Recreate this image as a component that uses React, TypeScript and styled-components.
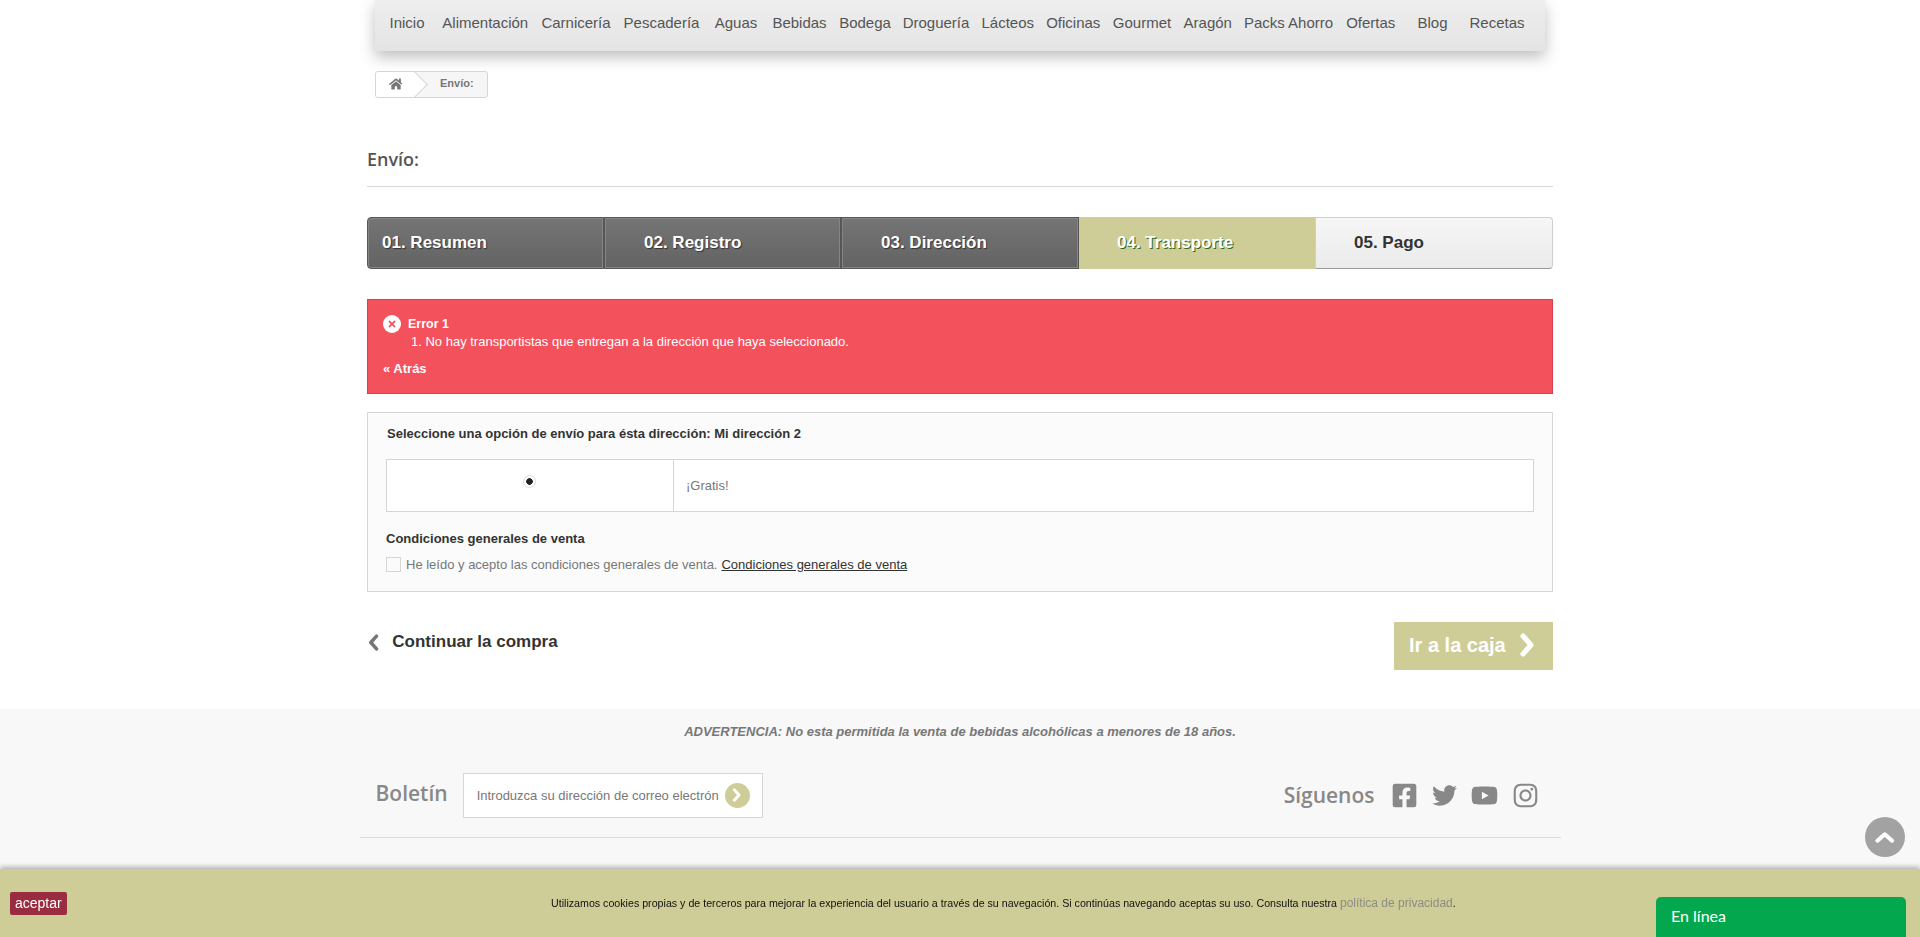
import React from "react";
import styled, { createGlobalStyle } from "styled-components";
import { FaHome, FaFacebookSquare, FaTwitter, FaYoutube, FaInstagram, FaTimes } from "react-icons/fa";

const Global = createGlobalStyle`
  html, body { margin: 0; padding: 0; height: 937px; overflow: hidden; background: #fff; }
  body { font-family: "Liberation Sans", Arial, sans-serif; color: #777; }
  * { box-sizing: border-box; }
`;

const Page = styled.div`
  position: relative;
  height: 937px;
  overflow: hidden;
`;
const NavBar = styled.nav`
  width: 1170px;
  height: 51px;
  margin: 0 auto;
  padding: 0 0 7px 4px;
  display: flex;
  align-items: center;
  background: linear-gradient(#eeeeee, #e4e4e4);
  box-shadow: 0 6px 14px rgba(0, 0, 0, 0.26);
`;
const NavItem = styled.a<{ $w: number }>`
  flex: none;
  width: ${(p) => p.$w}px;
  text-align: center;
  font-size: 15px;
  color: #555;
  white-space: nowrap;
`;
const Main = styled.main`
  width: 1186px;
  margin: 0 auto;
`;
const Crumb = styled.div`
  width: 113px;
  height: 27px;
  margin: 20px 0 0 8px;
  display: flex;
  border: 1px solid #d6d6d6;
  border-radius: 3px;
  background: #f6f6f6;
  overflow: hidden;
`;
const CrumbHome = styled.span`
  position: relative;
  width: 40px;
  display: flex;
  align-items: center;
  justify-content: center;
  padding: 0 0 2px 0;
  background: #fff;
  color: #777;
  font-size: 14px;
  &::after {
    content: "";
    position: absolute;
    top: 0;
    left: 29px;
    width: 18px;
    height: 18px;
    margin-top: 3px;
    transform: rotate(45deg);
    background: #fff;
    border-top: 1px solid #d6d6d6;
    border-right: 1px solid #d6d6d6;
  }
`;
const CrumbText = styled.span`
  margin-left: 24px;
  font-size: 11px;
  font-weight: bold;
  line-height: 23px;
  color: #777;
`;
const Title = styled.h1`
  margin: 48px 0 0;
  padding-bottom: 13px;
  border-bottom: 1px solid #d6d6d6;
  font-family: "Open Sans", sans-serif;
  font-size: 18px;
  font-weight: 600;
  line-height: 27px;
  color: #555;
`;
const Steps = styled.ol`
  list-style: none;
  margin: 30px 0 0;
  padding: 0;
  height: 52px;
  display: grid;
  grid-template-columns: 237px 237px 238px 236px 1fr;
`;
const Step = styled.li<{ $state: "done" | "current" | "todo"; $pad: number }>`
  display: flex;
  align-items: center;
  padding-left: ${(p) => p.$pad}px;
  padding-bottom: 1px;
  font-size: 17px;
  font-weight: bold;
  ${(p) =>
    p.$state === "done" &&
    `background: linear-gradient(#757575, #636363); color: #fff; border: 1px solid #565656;
     box-shadow: inset 0 0 0 1px #858585; text-shadow: 1px 1px 1px #333;`}
  ${(p) =>
    p.$state === "current" &&
    `background: #cfcd97; color: #fff; text-shadow: 1px 1px 0 #2f6a1e;`}
  ${(p) =>
    p.$state === "todo" &&
    `background: linear-gradient(#f6f6f6, #ebebeb); color: #333; border: 1px solid #cfcfcf;
     border-bottom-color: #999; border-radius: 0 4px 4px 0;`}
  &:first-child { border-radius: 4px 0 0 4px; }
`;
const ErrorBox = styled.div`
  margin-top: 30px;
  height: 95px;
  padding: 15px 15px 0 15px;
  background: #f3515c;
  border: 1px solid #d4404b;
  color: #fff;
  font-size: 13px;
`;
const ErrorHead = styled.div`
  display: flex;
  align-items: center;
  gap: 7px;
  height: 18px;
  font-weight: bold;
  font-size: 12.5px;
`;
const ErrorIcon = styled.span`
  width: 18px;
  height: 18px;
  display: flex;
  align-items: center;
  justify-content: center;
  border-radius: 50%;
  background: #fff;
  color: #f3515c;
  font-size: 10px;
`;
const ErrorLine = styled.div`
  margin: 0 0 0 28px;
  line-height: 17px;
`;
const Back = styled.a`
  display: block;
  margin-top: 10px;
  font-weight: bold;
  line-height: 17px;
`;
const Panel = styled.section`
  margin-top: 18px;
  height: 180px;
  padding: 12px 18px 0;
  background: #fbfbfb;
  border: 1px solid #d6d6d6;
  font-size: 13px;
`;
const PanelTitle = styled.h2`
  margin: 0 0 16px 1px;
  font-size: 13px;
  line-height: 18px;
  font-weight: bold;
  color: #333;
`;
const Carrier = styled.div`
  height: 53px;
  display: grid;
  grid-template-columns: 287px 1fr;
  background: #fff;
  border: 1px solid #d6d6d6;
`;
const RadioCell = styled.div`
  display: flex;
  justify-content: center;
  padding: 15px 2px 0 0;
  border-right: 1px solid #d6d6d6;
`;
const Radio = styled.span`
  width: 13px;
  height: 13px;
  border-radius: 50%;
  border: 1px solid #ddd;
  background: radial-gradient(circle, #222 0 3px, #fff 3.5px);
`;
const Free = styled.div`
  padding-left: 12px;
  line-height: 51px;
  color: #777;
`;
const TermsTitle = styled.h3`
  margin: 18px 0 0;
  font-size: 13px;
  line-height: 18px;
  font-weight: bold;
  color: #333;
`;
const Terms = styled.div`
  display: flex;
  align-items: center;
  gap: 4px;
  margin-top: 8px;
  height: 16px;
  color: #777;
`;
const Check = styled.span`
  width: 15px;
  height: 15px;
  margin-right: 1px;
  border: 1px solid #d6d6d6;
  background: #fbfbfb;
`;
const TermsLink = styled.a`
  color: #333;
  text-decoration: underline;
`;
const Actions = styled.div`
  margin-top: 30px;
  display: flex;
  justify-content: space-between;
  height: 48px;
`;
const Continue = styled.a`
  display: flex;
  align-items: center;
  gap: 13px;
  height: 40px;
  padding-left: 1px;
  font-size: 17px;
  font-weight: bold;
  color: #333;
`;
const Checkout = styled.a`
  width: 159px;
  display: flex;
  align-items: center;
  gap: 13px;
  padding-left: 15px;
  padding-bottom: 2px;
  background: #cfcd97;
  color: #fff;
  font-size: 20px;
  font-weight: bold;
`;
const Arrow = styled.svg<{ $h: number }>`
  flex: none;
  display: block;
  height: ${(p) => p.$h}px;
  width: auto;
  fill: none;
  stroke: currentColor;
  stroke-width: 5;
  stroke-linecap: round;
  stroke-linejoin: round;
`;
const BackArrow = styled(Arrow)`
  color: #777;
`;
const Footer = styled.footer`
  margin-top: 39px;
  height: 228px;
  background: #f8f8f8;
`;
const Warning = styled.p`
  margin: 0;
  padding-top: 15px;
  text-align: center;
  font-size: 13px;
  line-height: 16px;
  font-weight: bold;
  font-style: italic;
  color: #777;
`;
const FooterRow = styled.div`
  width: 1201px;
  height: 74px;
  margin: 24px auto 0;
  padding: 0 0 11px 16px;
  display: flex;
  align-items: center;
  justify-content: space-between;
  border-bottom: 1px solid #dcdcdc;
`;
const Group = styled.div<{ $gap: number }>`
  display: flex;
  align-items: center;
  gap: ${(p) => p.$gap}px;
`;
const FooterLabel = styled.span<{ $shift: number }>`
  margin-top: ${(p) => p.$shift}px;
  font-family: "Open Sans", sans-serif;
  font-size: 21px;
  font-weight: 600;
  color: #888;
`;
const News = styled.div`
  width: 300px;
  height: 45px;
  padding: 0 12px 0 13px;
  display: flex;
  align-items: center;
  justify-content: space-between;
  background: #fff;
  border: 1px solid #d6d6d6;
  font-size: 13px;
  color: #777;
  white-space: nowrap;
`;
const NewsGo = styled.span`
  width: 25px;
  height: 25px;
  display: flex;
  align-items: center;
  justify-content: center;
  border-radius: 50%;
  background: #cfcd97;
  color: #fff;
`;
const Social = styled.div`
  display: flex;
  align-items: center;
  gap: 14px;
  margin-right: 22px;
  color: #888;
  font-size: 27px;
  svg { display: block; }
`;
const ToTop = styled.a`
  position: fixed;
  right: 15px;
  top: 817px;
  width: 40px;
  height: 40px;
  display: flex;
  align-items: center;
  justify-content: center;
  border-radius: 50%;
  background: #a2a2a2;
  color: #fff;
`;
const CookieBar = styled.div`
  position: fixed;
  left: 0;
  right: 0;
  bottom: 0;
  height: 68px;
  display: flex;
  align-items: flex-start;
  background: #cfcd97;
  box-shadow: 0 -2px 5px rgba(0, 0, 0, 0.3);
`;
const Accept = styled.a`
  position: absolute;
  left: 10px;
  top: 23px;
  height: 23px;
  padding: 0 5px;
  border-radius: 2px;
  background: #9a2c40;
  color: #fff;
  font-size: 14px;
  line-height: 23px;
`;
const CookieText = styled.p`
  margin: 26px 0 0 551px;
  font-size: 10.67px;
  line-height: 16px;
  color: #111;
  white-space: nowrap;
`;
const Policy = styled.a`
  font-size: 12px;
  color: #8c8c84;
`;
const Chat = styled.div`
  position: fixed;
  right: 14px;
  bottom: 0;
  width: 250px;
  height: 40px;
  padding: 9px 15px 0;
  border-radius: 5px 5px 0 0;
  background: #03a84e;
  color: #fff;
  font-family: Lato, sans-serif;
  font-size: 16px;
  line-height: 20px;
`;

const navItems: [string, number][] = [
  ["Inicio", 56], ["Alimentación", 100.5], ["Carnicería", 81], ["Pescadería", 90], ["Aguas", 59], ["Bebidas", 68],
  ["Bodega", 63], ["Droguería", 79], ["Lácteos", 64.5], ["Oficinas", 66.5], ["Gourmet", 71], ["Aragón", 60.5],
  ["Packs Ahorro", 101], ["Ofertas", 63.5], ["Blog", 60], ["Recetas", 69],
];

const ChevronRight = ({ h }: { h: number }) => (
  <Arrow $h={h} viewBox="0 0 16 24"><polyline points="4,3 12,12 4,21" /></Arrow>
);

export default function App() {
  return (
    <Page>
      <Global />
      <NavBar>
        {navItems.map(([t, w]) => (
          <NavItem key={t} $w={w}>{t}</NavItem>
        ))}
      </NavBar>
      <Main>
        <Crumb>
          <CrumbHome><FaHome /></CrumbHome>
          <CrumbText>Envío:</CrumbText>
        </Crumb>
        <Title>Envío:</Title>
        <Steps>
          <Step $state="done" $pad={14}>01. Resumen</Step>
          <Step $state="done" $pad={39}>02. Registro</Step>
          <Step $state="done" $pad={39}>03. Dirección</Step>
          <Step $state="current" $pad={38}>04. Transporte</Step>
          <Step $state="todo" $pad={38}>05. Pago</Step>
        </Steps>
        <ErrorBox>
          <ErrorHead>
            <ErrorIcon><FaTimes /></ErrorIcon>
            Error 1
          </ErrorHead>
          <ErrorLine>1. No hay transportistas que entregan a la dirección que haya seleccionado.</ErrorLine>
          <Back>« Atrás</Back>
        </ErrorBox>
        <Panel>
          <PanelTitle>Seleccione una opción de envío para ésta dirección: Mi dirección 2</PanelTitle>
          <Carrier>
            <RadioCell><Radio /></RadioCell>
            <Free>¡Gratis!</Free>
          </Carrier>
          <TermsTitle>Condiciones generales de venta</TermsTitle>
          <Terms>
            <Check />
            <span>He leído y acepto las condiciones generales de venta.</span>
            <TermsLink>Condiciones generales de venta</TermsLink>
          </Terms>
        </Panel>
        <Actions>
          <Continue>
            <BackArrow $h={17} viewBox="0 0 16 24"><polyline points="12,3 4,12 12,21" /></BackArrow>
            Continuar la compra
          </Continue>
          <Checkout>Ir a la caja<ChevronRight h={24} /></Checkout>
        </Actions>
      </Main>
      <Footer>
        <Warning>ADVERTENCIA: No esta permitida la venta de bebidas alcohólicas a menores de 18 años.</Warning>
        <FooterRow>
          <Group $gap={15}>
            <FooterLabel $shift={-4}>Boletín</FooterLabel>
            <News>
              Introduzca su dirección de correo electrón
              <NewsGo><ChevronRight h={14} /></NewsGo>
            </News>
          </Group>
          <Group $gap={16}>
            <FooterLabel $shift={0}>Síguenos</FooterLabel>
            <Social>
              <FaFacebookSquare />
              <FaTwitter size={25} />
              <FaYoutube />
              <FaInstagram />
            </Social>
          </Group>
        </FooterRow>
      </Footer>
      <ToTop>
        <Arrow $h={13} viewBox="0 0 24 16"><polyline points="3,12 12,4 21,12" /></Arrow>
      </ToTop>
      <CookieBar>
        <Accept>aceptar</Accept>
        <CookieText>
          Utilizamos cookies propias y de terceros para mejorar la experiencia del usuario a través de su navegación. Si continúas navegando aceptas su uso. Consulta nuestra <Policy>política de privacidad</Policy>.
        </CookieText>
      </CookieBar>
      <Chat>En línea</Chat>
    </Page>
  );
}
